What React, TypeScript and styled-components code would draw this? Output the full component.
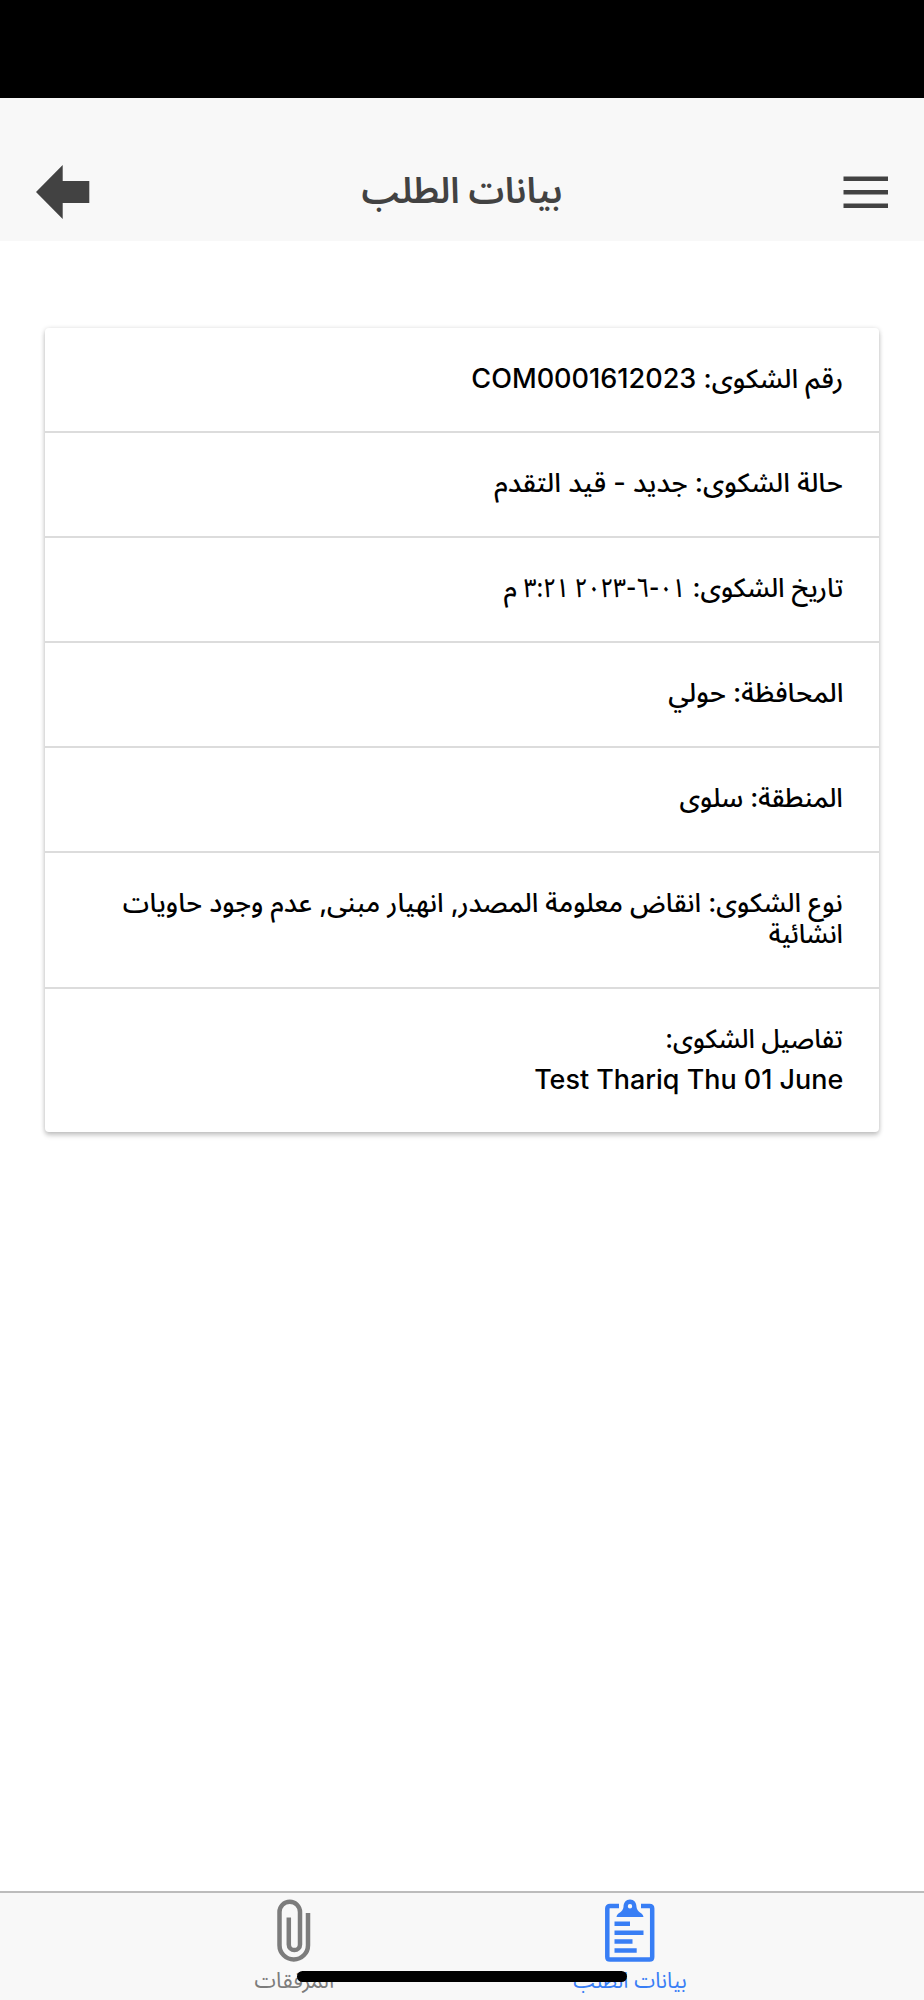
import React from "react";
import styled, { createGlobalStyle } from "styled-components";

const GlobalStyle = createGlobalStyle`
  * { box-sizing: border-box; }
  body { margin: 0; background: #fff; }
`;

const Screen = styled.div`
  width: 924px;
  height: 2000px;
  display: flex;
  flex-direction: column;
  position: relative;
  overflow: hidden;
  background: #fff;
  color: #000;
  font-family: Inter, "Noto Sans Arabic", "DejaVu Sans", sans-serif;
`;

const StatusArea = styled.div`
  height: 98px;
  flex: none;
  background: #000;
`;

const Toolbar = styled.header`
  height: 143px;
  flex: none;
  display: flex;
  align-items: flex-end;
  justify-content: space-between;
  padding: 0 36px 22px;
  background: #f8f8f8;
  color: #424242;
`;

const ToolbarSlot = styled.div`
  width: 54px;
  height: 56px;
`;

const Title = styled.h1<{ $stretch: number }>`
  margin: 0 0 1px;
  font-size: 36px;
  font-weight: 600;
  line-height: 56px;
  white-space: nowrap;
  transform: scaleX(${(p) => p.$stretch});
`;

const Content = styled.main`
  flex: 1;
  padding: 87px 45px 0;
`;

const Card = styled.section`
  border-radius: 4px;
  background: #fff;
  box-shadow: 0 4px 5px rgba(0, 0, 0, 0.13), 0 1px 5px rgba(0, 0, 0, 0.2);
`;

const Row = styled.div<{ $height: number }>`
  height: ${(p) => p.$height}px;
  padding: 33px 36px 0;
  font-size: 26.5px;
  font-weight: 500;
  line-height: 32px;
  &:first-child { padding-top: 34px; }
  & + & { border-top: 2px solid #dcdcdc; }
`;

const Line = styled.div<{ $stretch?: number; $gap?: number }>`
  width: max-content;
  margin-top: ${(p) => p.$gap ?? 0}px;
  white-space: nowrap;
  transform: scaleX(${(p) => p.$stretch ?? 1});
  transform-origin: right center;
`;

const Digits = styled.span`
  display: inline-block;
  margin-left: -29px;
  transform: scaleX(0.848);
  transform-origin: right center;
`;

const TabBar = styled.nav`
  height: 109px;
  flex: none;
  display: flex;
  justify-content: center;
  border-top: 2px solid #bcbcbc;
  background: #f8f8f8;
`;

const Tab = styled.div<{ $active?: boolean }>`
  width: 336px;
  display: flex;
  flex-direction: column;
  align-items: center;
  padding-top: 6px;
  color: ${(p) => (p.$active ? "#387ef5" : "#7c7c7c")};
`;

const TabLabel = styled.span<{ $stretch: number }>`
  margin-top: 5px;
  font-size: 22px;
  line-height: 26px;
  white-space: nowrap;
  transform: scaleX(${(p) => p.$stretch});
`;

const HomeIndicator = styled.div`
  position: absolute;
  left: 297px;
  top: 1971px;
  width: 330px;
  height: 11px;
  border-radius: 6px;
  background: #000;
`;

type TextLine = { text: React.ReactNode; stretch?: number; gap?: number };

const rows: { height: number; lines: TextLine[] }[] = [
  { height: 103, lines: [{ text: "رقم الشكوى: COM0001612023", stretch: 1.021 }] },
  { height: 105, lines: [{ text: "حالة الشكوى: جديد - قيد التقدم", stretch: 1.026 }] },
  { height: 105, lines: [{ text: <>تاريخ الشكوى: <Digits>٠١-٦-٢٠٢٣ ٣:٢١</Digits> م</>, stretch: 0.995 }] },
  { height: 105, lines: [{ text: "المحافظة: حولي", stretch: 1.028 }] },
  { height: 105, lines: [{ text: "المنطقة: سلوى", stretch: 0.997 }] },
  {
    height: 136,
    lines: [
      { text: "نوع الشكوى: انقاض معلومة المصدر, انهيار مبنى, عدم وجود حاويات", stretch: 1.003 },
      { text: "انشائية", stretch: 0.965, gap: -1 },
    ],
  },
  {
    height: 145,
    lines: [
      { text: "تفاصيل الشكوى:", stretch: 0.966 },
      { text: "Test Thariq Thu 01 June", stretch: 1.016, gap: 9 },
    ],
  },
];

const MenuIcon = () => (
  <svg width="45" height="56" viewBox="0 0 45 56" fill="currentColor">
    <path d="M.5 13.500h44.500v4.500H.5zM.5 27h44.500v4.500H.5zM.5 40.500h44.500v4.500H.5z" />
  </svg>
);

const BackIcon = () => (
  <svg width="54" height="56" viewBox="0 0 54 56" fill="currentColor">
    <path d="M0 29L26.700 2v16h26.600v22H26.700v16z" />
  </svg>
);

const ClipboardIcon = () => (
  <svg width="50" height="63" viewBox="0 0 50 63">
    <path d="M14 7H5Q2.300 7 2.300 9.500V58Q2.300 60.600 5 60.600H44.500Q47.200 60.600 47.200 58V9.500Q47.200 7 44.500 7H36" fill="none" stroke="currentColor" strokeWidth="4.500" />
    <path fillRule="evenodd" fill="currentColor" d="M11.500 18C12 13.500 18 13.500 18.500 8C18.500 3.500 21 .5 25 .5S31.500 3.500 31.500 8C32 13.500 38 13.500 38.500 18zM25 5a2.200 2.200 0 1 0 0 4.400A2.200 2.200 0 0 0 25 5z" />
    <path fill="currentColor" d="M9.500 22.500h15.500v4.500H9.500zM9.500 31.500h29v4.500h-29zM9.500 40.300h18v4.500h-18zM9.500 49.200h22.200v4.500H9.500z" />
  </svg>
);

const PaperclipIcon = () => (
  <svg width="34" height="63" viewBox="0 0 34 63" fill="none" stroke="currentColor" strokeWidth="4.500">
    <path d="M31 14V46.200a14.250 14.250 0 0 1-28.500 0V13a10.250 10.250 0 0 1 20.500 0V45.500a5.600 5.600 0 0 1-11.200 0V18.500" />
  </svg>
);

export default function App() {
  return (
    <Screen dir="rtl" lang="ar">
      <GlobalStyle />
      <StatusArea />
      <Toolbar>
        <ToolbarSlot><MenuIcon /></ToolbarSlot>
        <Title $stretch={0.995}>بيانات الطلب</Title>
        <ToolbarSlot><BackIcon /></ToolbarSlot>
      </Toolbar>
      <Content>
        <Card>
          {rows.map((row, i) => (
            <Row key={i} $height={row.height}>
              {row.lines.map((line, j) => (
                <Line key={j} $stretch={line.stretch} $gap={line.gap}>{line.text}</Line>
              ))}
            </Row>
          ))}
        </Card>
      </Content>
      <TabBar>
        <Tab $active>
          <ClipboardIcon />
          <TabLabel $stretch={0.96}>بيانات الطلب</TabLabel>
        </Tab>
        <Tab>
          <PaperclipIcon />
          <TabLabel $stretch={0.985}>المرفقات</TabLabel>
        </Tab>
      </TabBar>
      <HomeIndicator />
    </Screen>
  );
}
